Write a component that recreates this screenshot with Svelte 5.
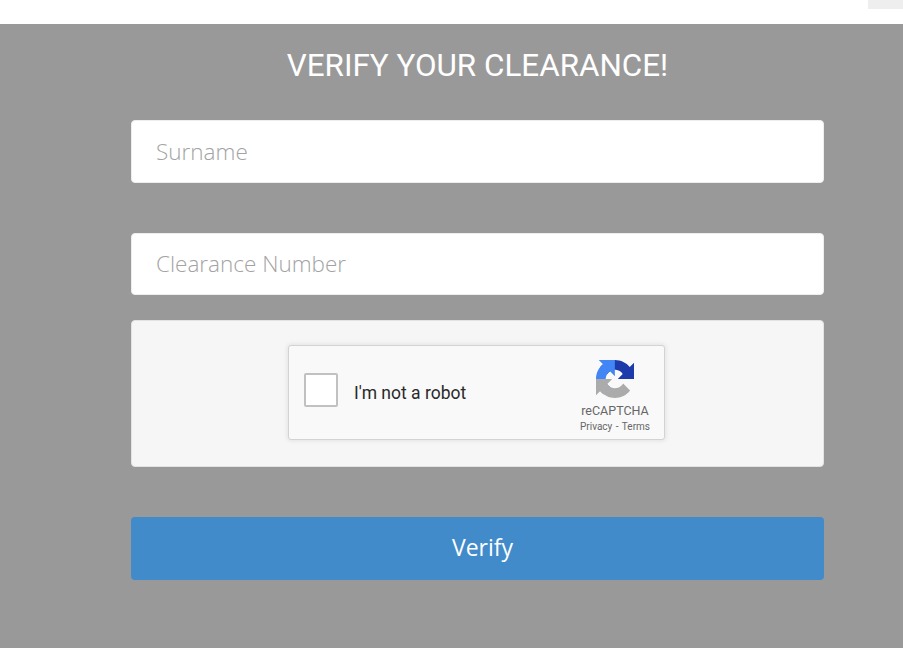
<script>
  let surname = $state('');
  let clearance = $state('');
  let checked = $state(false);
</script>

<div class="page">
  <header class="topbar"><span class="corner"></span></header>
  <main class="content">
    <h1>VERIFY YOUR CLEARANCE!</h1>
    <form class="form" onsubmit={(e) => e.preventDefault()}>
      <input class="field first" placeholder="Surname" bind:value={surname} />
      <input class="field second" placeholder="Clearance Number" bind:value={clearance} />
      <div class="captcha-panel">
        <div class="captcha">
          <button type="button" class="check" aria-label="I'm not a robot" onclick={() => (checked = !checked)}></button>
          <span class="label">I'm not a robot</span>
          <div class="brand">
            <svg class="logo" viewBox="0 0 64 64" width="38" height="38" aria-hidden="true">
              <path fill="#1c3aa9" d="M64 31.955l-.033-1.37V4.687l-7.16 7.16C50.948 4.674 42.033.093 32.05.093c-10.4 0-19.622 4.96-25.458 12.64l11.736 11.86a15.55 15.55 0 0 1 4.754-5.334c2.05-1.6 4.952-2.906 8.968-2.906.485 0 .86.057 1.135.163 4.976.393 9.288 3.14 11.828 7.124l-8.307 8.307c10.522-.04 22.4-.066 27.295.005"/>
              <path fill="#4285f4" d="M31.862.094l-1.37.033H4.594l7.16 7.16C4.58 13.147 0 22.06 0 32.046c0 10.4 4.96 19.622 12.64 25.458l11.86-11.736a15.55 15.55 0 0 1-5.334-4.754c-1.6-2.05-2.906-4.952-2.906-8.968 0-.485.057-.86.163-1.135.393-4.976 3.14-9.288 7.124-11.828l8.307 8.307c-.04-10.522-.066-22.4.005-27.295"/>
              <path fill="#ababab" d="M.001 32.045l.033 1.37v25.898l7.16-7.16c5.86 7.173 14.774 11.754 24.76 11.754 10.4 0 19.622-4.96 25.458-12.64l-11.736-11.86a15.55 15.55 0 0 1-4.754 5.334c-2.05 1.6-4.952 2.906-8.968 2.906-.485 0-.86-.057-1.135-.163-4.976-.393-9.288-3.14-11.828-7.124l8.307-8.307c-10.522.04-22.4.066-27.295-.005"/>
            </svg>
            <span class="name">reCAPTCHA</span>
            <span class="links">Privacy - Terms</span>
          </div>
        </div>
      </div>
      <button class="submit" type="submit">Verify</button>
    </form>
  </main>
</div>

<style>
  :global(body) {
    margin: 0;
    background: #999999;
  }
  .page {
    width: 903px;
    height: 648px;
    overflow: hidden;
    background: #999999;
    display: flex;
    flex-direction: column;
  }
  .topbar {
    height: 24px;
    flex: none;
    background: #ffffff;
    display: flex;
    justify-content: flex-end;
  }
  .corner {
    width: 35px;
    height: 9px;
    background: #eeeeee;
  }
  .content {
    display: flex;
    flex-direction: column;
    align-items: center;
    padding-left: 52px;
  }
  h1 {
    margin: 23px 0 0;
    width: 693px;
    text-align: center;
    font: 400 31.400px/38px Roboto, sans-serif;
    color: #ffffff;
  }
  .form {
    width: 693px;
    margin-top: 35px;
    display: flex;
    flex-direction: column;
  }
  .field {
    box-sizing: border-box;
    width: 100%;
    border: 1px solid #eeeeee;
    border-radius: 4px;
    background: #ffffff;
    padding: 0 24px;
    outline: none;
    font: 300 22.500px "Open Sans", sans-serif;
    color: #555555;
  }
  .field::placeholder {
    color: #a3a3a3;
    opacity: 1;
  }
  .first {
    height: 63px;
    padding-bottom: 1px;
  }
  .second {
    height: 62px;
    margin-top: 50px;
    padding-bottom: 2px;
  }
  .captcha-panel {
    box-sizing: border-box;
    height: 147px;
    margin-top: 25px;
    border: 1px solid #e3e3e3;
    border-radius: 4px;
    background: #f6f6f6;
    display: flex;
    justify-content: center;
    padding-top: 24px;
  }
  .captcha {
    box-sizing: border-box;
    width: 377px;
    height: 95px;
    margin-left: -2px;
    border: 1px solid #d3d3d3;
    border-radius: 3px;
    background: #f9f9f9;
    box-shadow: 0 0 4px 1px rgba(0, 0, 0, 0.08);
    display: flex;
    align-items: center;
    padding-left: 15px;
    position: relative;
  }
  .check {
    box-sizing: border-box;
    width: 34px;
    height: 34px;
    padding: 0;
    flex: none;
    margin-bottom: 6px;
    border: 2px solid #c1c1c1;
    border-radius: 2px;
    background: #ffffff;
  }
  .label {
    margin-left: 16px;
    font: 400 17.500px Roboto, sans-serif;
    color: #2a2a2a;
  }
  .brand {
    position: absolute;
    left: 276px;
    top: 14px;
    width: 100px;
    display: flex;
    flex-direction: column;
    align-items: center;
    font-family: Roboto, sans-serif;
    color: #666666;
  }
  .logo {
    display: block;
  }
  .name {
    margin-top: 5px;
    font-size: 12.500px;
    line-height: 15px;
  }
  .links {
    margin-top: 2px;
    font-size: 10px;
    line-height: 13px;
    word-spacing: 1px;
  }
  .submit {
    height: 63px;
    margin-top: 50px;
    border: 0;
    border-radius: 4px;
    background: #428bca;
    color: #ffffff;
    padding: 0 0 4px 10px;
    font: 400 23px "Open Sans", sans-serif;
  }
</style>
